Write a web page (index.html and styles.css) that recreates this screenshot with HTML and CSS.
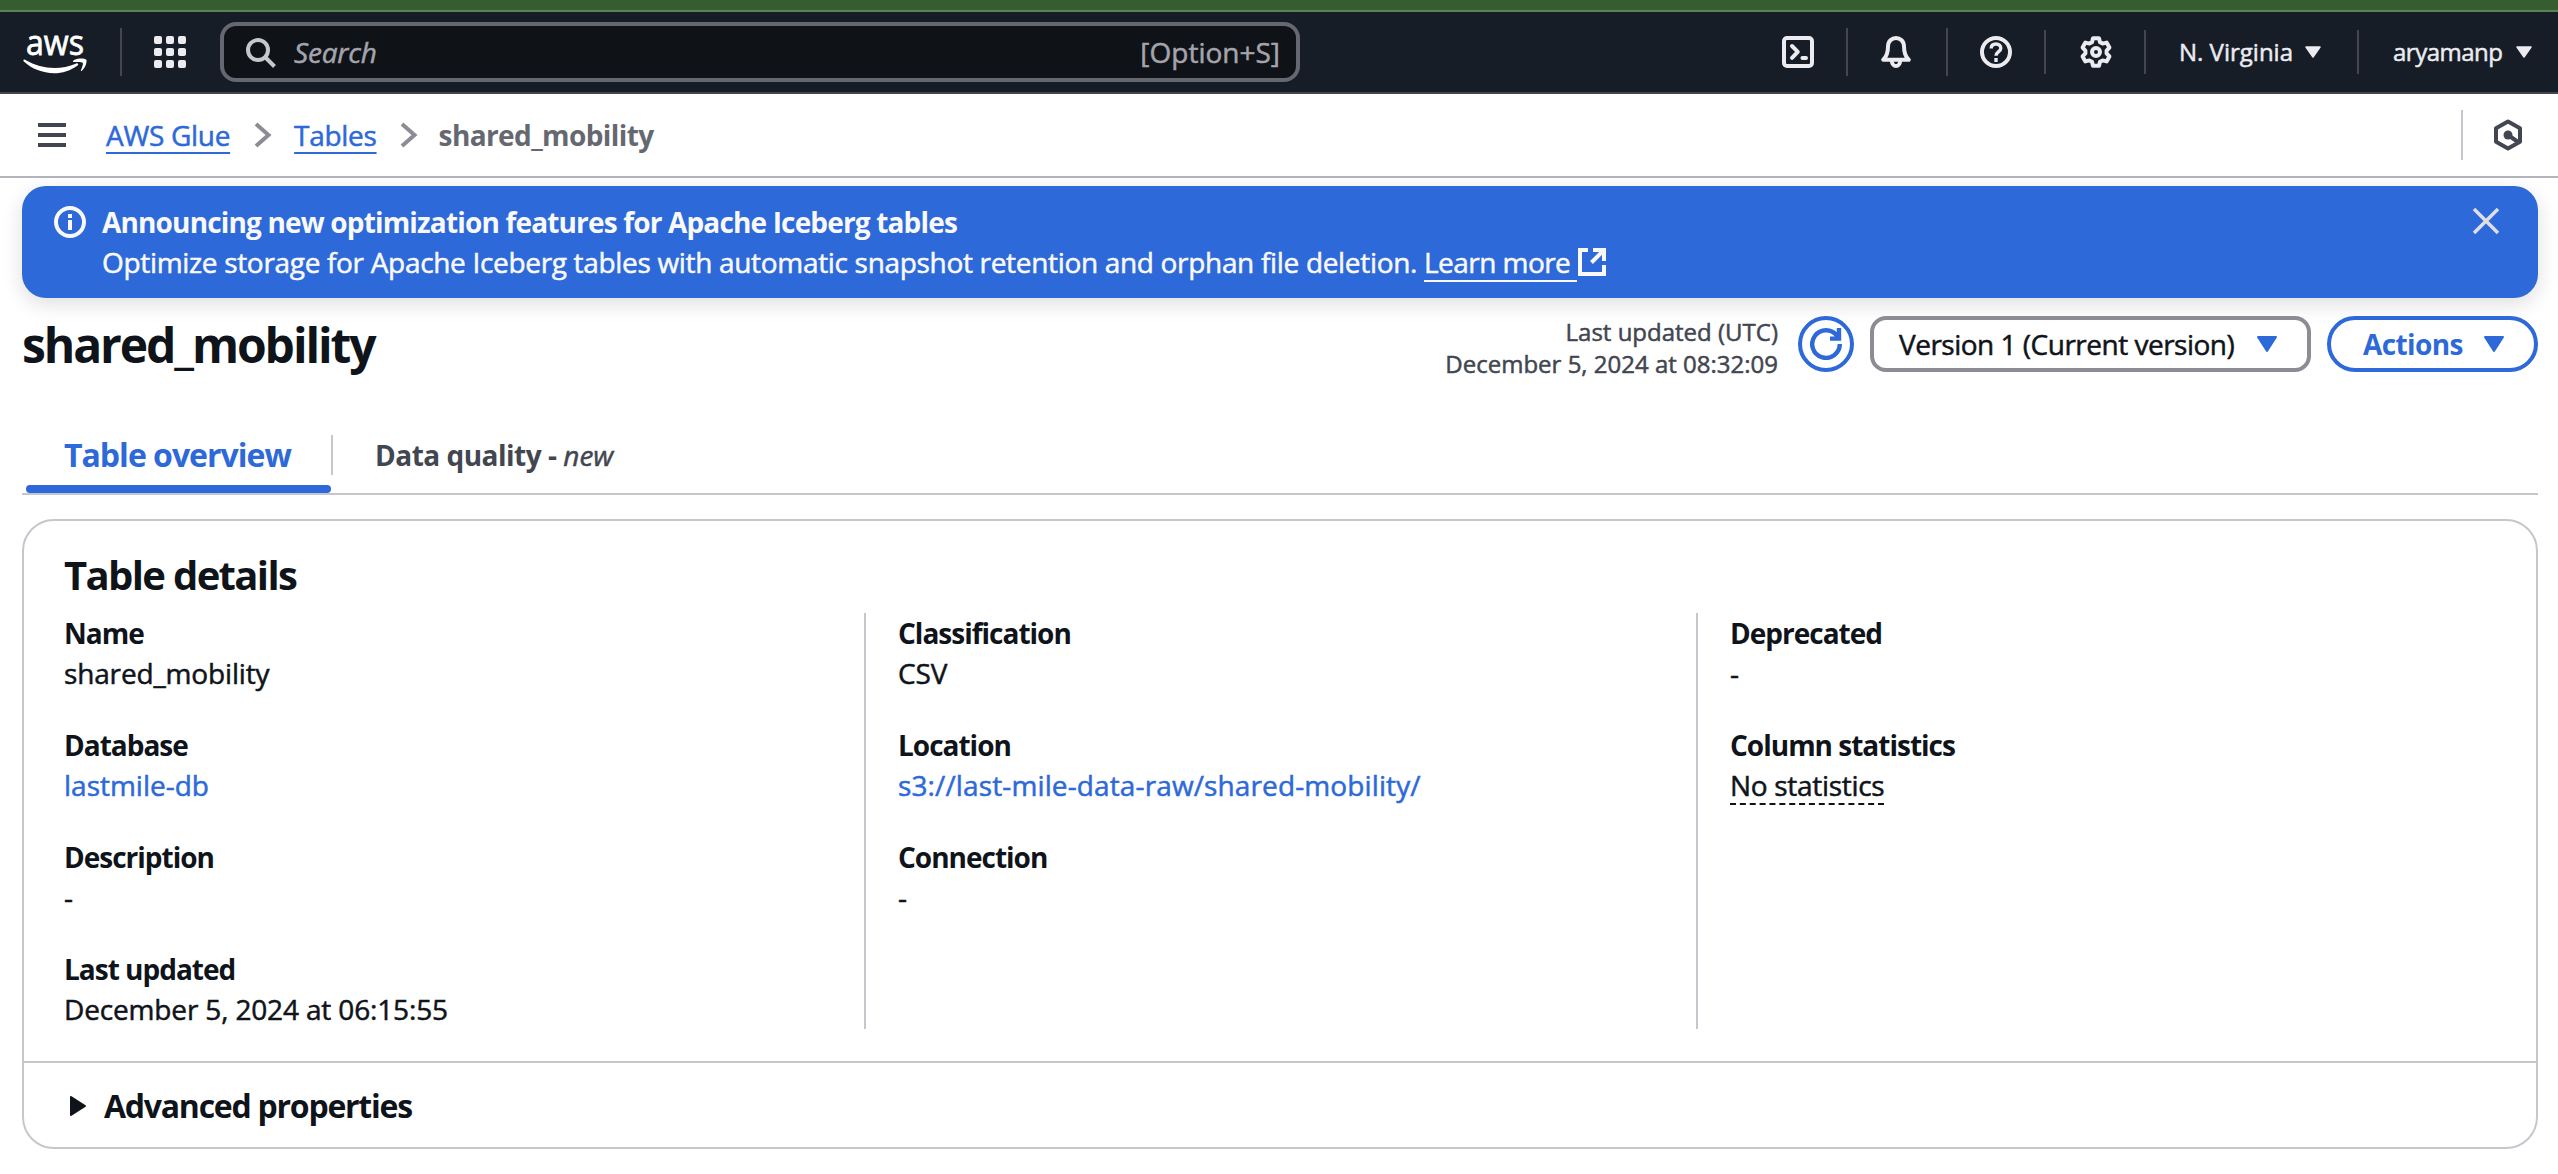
FILE: index.html
```html
<!DOCTYPE html>
<html lang="en">
<head>
<meta charset="utf-8">
<title>shared_mobility - AWS Glue</title>
<link rel="stylesheet" href="styles.css">
</head>
<body>
<div class="window-strip"></div>
<header class="nav">
  <svg class="logo" viewBox="0 0 68 54" role="img" aria-label="AWS">
    <text x="4" y="29.5" textLength="58" lengthAdjust="spacingAndGlyphs">aws</text>
    <g transform="translate(0 5)">
      <path d="M1.500 30c.6-.7 1.400-.4 2 0 9 5.300 19 8 29 8 7.200 0 14.600-1.600 21.800-4.600 1.500-.6 2.700.9 1.300 2C49 40.500 40 43.200 32.200 43.200 20.500 43.200 9.800 38.900 1.800 31.600c-.5-.5-.6-1-.3-1.600z"/>
      <path d="M51.500 30.500c3-2.100 7.500-2.400 11.500-1.600 1.500.4 1.800 1.200 1.500 3.200-.5 3.200-2 6.400-4.600 8.700-.7.600-1.300.300-1-.5.900-2.200 2.500-6.200 1.900-7.300-.7-1.200-5-1.200-8.700-.9-1.200.1-1.500-.9-.6-1.600z"/>
    </g>
  </svg>
  <i class="rule"></i>
  <div class="apps"><i></i><i></i><i></i><i></i><i></i><i></i><i></i><i></i><i></i></div>
  <div class="search">
    <svg viewBox="0 0 30 30"><circle cx="12" cy="12" r="10"/><path d="M19 19l9.500 9.500"/></svg>
    <em>Search</em>
    <span>[Option+S]</span>
  </div>
  <div class="tools">
    <div class="tool tool-shell"><svg viewBox="0 0 16 16"><rect x="1" y="1" width="14" height="14" rx="1.500"/><path d="M5 5l2.900 2.900L5 10.900M10.200 11h1.800" stroke-linecap="round"/></svg></div>
    <i class="rule"></i>
    <div class="tool tool-bell"><svg viewBox="0 0 16 16"><path d="M1.600 11.900C3.300 10.300 4 8.600 4 5.200 4 2.600 5.900 1 8 1s4 1.600 4 4.200c0 3.400.7 5.100 2.400 6.700zM5.900 12.500c.2 3.300 4 3.300 4.200 0"/></svg></div>
    <i class="rule"></i>
    <div class="tool"><svg viewBox="0 0 16 16"><circle cx="8" cy="8" r="7"/><path stroke-width="1.700" d="M5.600 6.200C5.600 4.800 6.600 4 8 4s2.400.8 2.400 2.100C10.400 7.800 8 7.800 8 9.900M8 11v2"/></svg></div>
    <i class="rule rule-short"></i>
    <div class="tool tool-gear"><svg viewBox="0 0 16 16"><path d="M6.500 1.100h3l.5 2 1.300.7 2-.5 1.400 2.500-1.400 1.500v1.400l1.400 1.500-1.400 2.500-2-.5-1.300.7-.5 2h-3l-.5-2-1.300-.7-2 .5-1.400-2.500 1.400-1.500V7.300L1.300 5.800l1.400-2.500 2 .5L6 3.100z"/><circle cx="8" cy="8" r="2"/></svg></div>
    <i class="rule rule-short"></i>
    <div class="menu menu-region"><span>N. Virginia</span><svg viewBox="0 0 16 12"><path d="M1 1h14L8 11z"/></svg></div>
    <i class="rule rule-short"></i>
    <div class="menu menu-user"><span>aryamanp</span><svg viewBox="0 0 16 12"><path d="M1 1h14L8 11z"/></svg></div>
  </div>
</header>

<nav class="crumbs">
  <div class="burger"><i></i><i></i><i></i></div>
  <a>AWS Glue</a>
  <svg class="chev" viewBox="0 0 18 26"><path d="M2 2l12.500 11L2 24"/></svg>
  <a>Tables</a>
  <svg class="chev" viewBox="0 0 18 26"><path d="M2 2l12.500 11L2 24"/></svg>
  <b>shared_mobility</b>
  <div class="hex"><svg viewBox="0 0 30 32"><path d="M15 2.500L27 9.200v13.600L15 29.500 3 22.800V9.200z"/><path d="M15 16l10 7"/><circle cx="15" cy="16" r="4.500"/></svg></div>
</nav>

<main>
  <section class="flash">
    <svg class="info" viewBox="0 0 16 16"><circle cx="8" cy="8" r="7"/><path d="M8 4v2M8 7v5"/></svg>
    <div class="flash-text">
      <b>Announcing new optimization features for Apache Iceberg tables</b>
      <p>Optimize storage for Apache Iceberg tables with automatic snapshot retention and orphan file deletion. <a>Learn more&nbsp;</a><svg viewBox="0 0 28 28"><path d="M10 2H2v24h24v-9M15 2h11v11M26 2L13.500 14.500"/></svg></p>
    </div>
    <svg class="close" viewBox="0 0 28 28"><path d="M2 2l24 24M26 2L2 26"/></svg>
  </section>

  <section class="heading">
    <h1>shared_mobility</h1>
    <p class="stamp">Last updated (UTC)<br>December 5, 2024 at 08:32:09</p>
    <div class="refresh"><svg viewBox="0 0 16 16"><path d="M14.900 8a6.900 6.900 0 1 1-1.300-4M10 5.300h4.500V0"/></svg></div>
    <div class="select"><span>Version 1 (Current version)</span><svg viewBox="0 0 20 16"><path d="M1 1h18L10 15z"/></svg></div>
    <div class="actions"><span>Actions</span><svg viewBox="0 0 20 16"><path d="M1 1h18L10 15z"/></svg></div>
  </section>

  <section class="tabs">
    <div class="tab tab-active">Table overview</div>
    <i class="tab-rule"></i>
    <div class="tab tab-idle">Data quality - <em>new</em></div>
  </section>

  <section class="card">
    <h2>Table details</h2>
    <div class="cols">
      <dl>
        <dt>Name</dt><dd>shared_mobility</dd>
        <dt>Database</dt><dd><a>lastmile-db</a></dd>
        <dt>Description</dt><dd>-</dd>
        <dt>Last updated</dt><dd>December 5, 2024 at 06:15:55</dd>
      </dl>
      <dl>
        <dt>Classification</dt><dd>CSV</dd>
        <dt>Location</dt><dd><a class="path">s3://last-mile-data-raw/shared-mobility/</a></dd>
        <dt>Connection</dt><dd>-</dd>
      </dl>
      <dl>
        <dt>Deprecated</dt><dd>-</dd>
        <dt>Column statistics</dt><dd><span class="hint">No statistics</span></dd>
      </dl>
    </div>
    <div class="advanced"><svg viewBox="0 0 16 20"><path d="M1 1v18l14-9z"/></svg><span>Advanced properties</span></div>
  </section>
</main>
</body>
</html>
```
FILE: styles.css
```css
* { box-sizing: border-box; }
body {
  margin: 0;
  background: #fff;
  color: #0f141a;
  font: 28px/40px "Open Sans", "Noto Sans", sans-serif;
  letter-spacing: -0.15px;
  -webkit-text-stroke: 0.5px;
}
h1, h2, p, dl, dd { margin: 0; }
svg { display: block; flex: none; fill: none; }
b, dt, h1, h2, .advanced, .tab, .actions { font-weight: 700; -webkit-text-stroke: 0; }

.window-strip { height: 12px; background: #355d2f; border-bottom: 2px solid #5b8257; }

/* Top navigation */
.nav {
  display: flex;
  align-items: center;
  height: 82px;
  background: #161d26;
  border-bottom: 2px solid #424650;
  color: #ebebf0;
}
.logo { width: 68px; height: 54px; margin-left: 22px; fill: #fff; overflow: visible; }
.logo text { font: 400 35px "Open Sans", sans-serif; letter-spacing: 0; stroke: #fff; stroke-width: 0.8px; }
.rule { width: 2px; height: 48px; background: #424650; flex: none; }
.rule-short { height: 44px; }
.logo + .rule { margin-left: 30px; }
.apps { display: grid; grid-template-columns: repeat(3, 8px); gap: 4px; margin-left: 32px; }
.apps i { height: 8px; border-radius: 2px; background: #ebebf0; }
.search {
  display: flex;
  align-items: center;
  width: 1080px;
  height: 60px;
  margin-left: 34px;
  padding: 0 16px 0 22px;
  border: 4px solid #656871;
  border-radius: 16px;
  background: #0f1217;
  color: #a4a4ad;
}
.search svg { width: 30px; height: 30px; margin-top: 1px; stroke: #c6c6cd; stroke-width: 4; }
.search em { margin-left: 18px; letter-spacing: -0.2px; }
.search span { margin-left: auto; letter-spacing: 0; }
.tools { display: flex; align-items: center; margin-left: auto; }
.tool { width: 96px; display: flex; justify-content: center; }
.tool svg { width: 32px; height: 32px; stroke: #ebebf0; stroke-width: 2; stroke-linejoin: round; }
.tool-bell { width: 98px; padding-right: 2px; }
.tool-gear { width: 98px; padding-left: 2px; }
.tool-shell { width: 64px; justify-content: flex-start; }
.menu { display: flex; align-items: center; justify-content: space-between; font-size: 24px; }
.menu svg { width: 16px; height: 12px; fill: #ebebf0; stroke: #ebebf0; stroke-width: 1.5; stroke-linejoin: round; }
.menu-region { width: 211px; padding: 0 36px 0 33px; letter-spacing: 0; }
.menu-user { width: 199px; padding: 0 26px 0 34px; letter-spacing: -0.5px; }

/* Breadcrumbs */
.crumbs {
  display: flex;
  align-items: center;
  height: 84px;
  border-bottom: 2px solid #b4b4bb;
}
.burger { display: grid; gap: 6px; width: 28px; margin: 0 40px 0 38px; }
.burger i { height: 4px; background: #424650; }
.crumbs a {
  height: 40px;
  color: #2d69d8;
  letter-spacing: -0.3px;
  text-decoration: underline;
  text-decoration-thickness: 2px;
  text-underline-offset: 6px;
  text-decoration-skip-ink: none;
}
.chev { width: 18px; height: 26px; margin: 0 22px 0 24px; stroke: #8c8c94; stroke-width: 4; }
.chev ~ .chev { margin: 0 21px 0 23px; }
.crumbs b { height: 40px; color: #656871; letter-spacing: -0.6px; }
.hex {
  display: flex;
  align-items: center;
  height: 50px;
  margin-left: auto;
  padding: 0 35px 0 30px;
  border-left: 2px solid #c6c6cd;
}
.hex svg { width: 30px; height: 32px; stroke: #424650; stroke-width: 4; stroke-linejoin: round; }
.hex circle { fill: #424650; stroke: none; }

/* Announcement */
main { padding: 8px 20px 0 22px; }
.flash {
  display: flex;
  align-items: flex-start;
  height: 112px;
  padding: 16px 38px 0 32px;
  border-radius: 24px;
  background: #2d69d8;
  color: #f9f9fa;
  box-shadow: 0 6px 20px 1px rgba(0, 7, 22, 0.12);
}
.info { width: 32px; height: 32px; margin-top: 4px; stroke: #f9f9fa; stroke-width: 2; }
.flash-text { margin-left: 16px; white-space: nowrap; }
.flash-text b { display: block; letter-spacing: -0.84px; }
.flash-text p { display: flex; letter-spacing: -0.32px; white-space: pre; }
.flash-text a {
  letter-spacing: -0.55px;
  text-decoration: underline;
  text-decoration-thickness: 2px;
  text-underline-offset: 7px;
  text-decoration-skip-ink: none;
}
.flash-text svg { width: 28px; height: 28px; margin: 6px 0 0 1px; stroke: #f9f9fa; stroke-width: 4; }
.close { width: 28px; height: 28px; margin: 5px 0 0 auto; stroke: #dedee3; stroke-width: 3.5; }

/* Page heading */
.heading { display: flex; align-items: center; height: 56px; margin-top: 18px; }
h1 { padding-top: 1px; font-size: 48px; line-height: 56px; letter-spacing: -2.1px; }
.stamp {
  margin: 8px 20px 0 auto;
  text-align: right;
  font-size: 24px;
  line-height: 32px;
  letter-spacing: 0;
  color: #424650;
}
.refresh {
  display: grid;
  place-items: center;
  width: 56px;
  height: 56px;
  border: 4px solid #2d69d8;
  border-radius: 50%;
}
.refresh svg { width: 32px; height: 32px; stroke: #2d69d8; stroke-width: 2.2; }
.select, .actions { display: flex; align-items: center; justify-content: space-between; height: 56px; }
.select svg, .actions svg { width: 20px; height: 16px; fill: #2d69d8; stroke: #2d69d8; stroke-width: 2; stroke-linejoin: round; }
.select {
  width: 441px;
  margin-left: 16px;
  padding: 0 30px 0 25px;
  border: 4px solid #8c8c94;
  border-radius: 16px;
  letter-spacing: -0.5px;
}
.actions {
  width: 211px;
  margin-left: 16px;
  padding: 0 30px 0 32px;
  border: 4px solid #2d69d8;
  border-radius: 28px;
  color: #2d69d8;
  letter-spacing: -0.6px;
}

/* Tabs */
.tabs { display: flex; align-items: stretch; height: 72px; margin-top: 51px; border-bottom: 2px solid #c6c6cd; }
.tab { line-height: 64px; white-space: nowrap; }
.tab-active {
  width: 305px;
  margin-left: 4px;
  padding-left: 38px;
  font-size: 32px;
  letter-spacing: -1px;
  color: #2d69d8;
}
.tab-active::after { content: ""; display: block; height: 8px; margin: -2px 0 0 -38px; border-radius: 4px; background: #2d69d8; }
.tab-rule { width: 2px; height: 40px; margin-top: 12px; background: #c6c6cd; }
.tab-idle { padding-left: 42px; color: #424650; letter-spacing: -0.5px; }
.tab-idle em { font-weight: 400; letter-spacing: 0; -webkit-text-stroke: 0.5px; }

/* Details card */
.card { height: 630px; width: 2516px; margin-top: 24px; border: 2px solid #c6c6cd; border-radius: 32px; }
h2 { padding: 29px 0 0 40px; font-size: 40px; line-height: 50px; letter-spacing: -1.65px; }
.cols { display: flex; margin-top: 13px; }
.cols dl { width: 832px; height: 416px; padding-left: 32px; border-left: 2px solid #c6c6cd; }
.cols dl:first-child { width: 840px; padding-left: 40px; border-left: 0; }
dt { letter-spacing: -1px; }
dd { margin-bottom: 32px; }
.cols a { color: #2d69d8; letter-spacing: 0; }
.cols .path { letter-spacing: 0.12px; }
.hint { display: inline-block; border-bottom: 2px dashed #0f141a; line-height: 35px; letter-spacing: -0.3px; }
.advanced {
  display: flex;
  align-items: center;
  height: 87px;
  margin-top: 32px;
  padding-left: 46px;
  border-top: 2px solid #c6c6cd;
  font-size: 32px;
  letter-spacing: -1.25px;
}
.advanced svg { width: 16px; height: 20px; margin-right: 18px; fill: #0f141a; stroke: #0f141a; stroke-width: 2; stroke-linejoin: round; }
```
